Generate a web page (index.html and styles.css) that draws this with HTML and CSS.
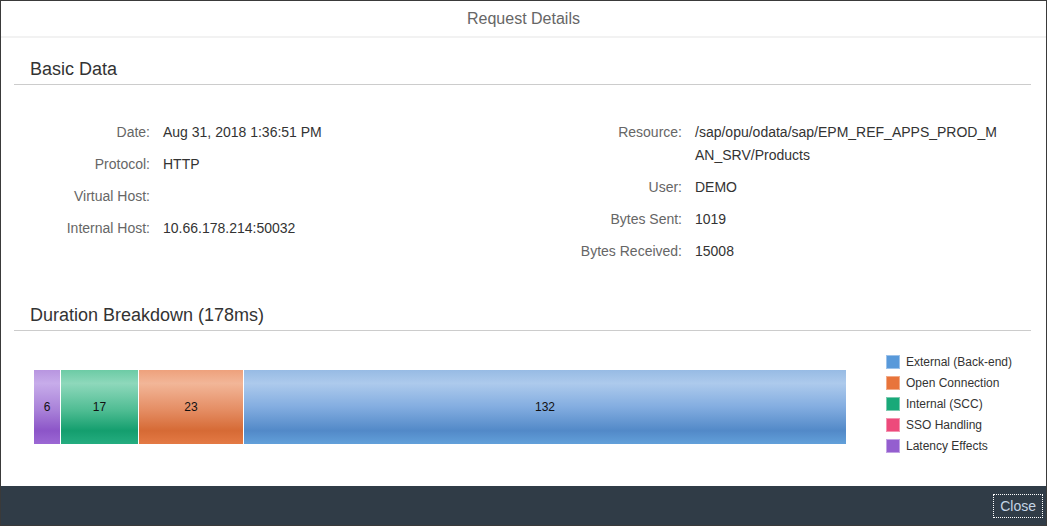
FILE: index.html
```html
<!DOCTYPE html>
<html>
<head>
<meta charset="utf-8">
<link rel="stylesheet" href="styles.css">
</head>
<body>
<div class="dialog">
  <header class="dlg-header">Request Details</header>
  <main class="dlg-content">
    <section class="section">
      <h2 class="section-title">Basic Data</h2>
      <div class="form">
        <div class="pane pane-left">
          <div class="lbl">Date:</div><div class="val">Aug 31, 2018 1:36:51 PM</div>
          <div class="lbl">Protocol:</div><div class="val">HTTP</div>
          <div class="lbl">Virtual Host:</div><div class="val"></div>
          <div class="lbl">Internal Host:</div><div class="val">10.66.178.214:50032</div>
        </div>
        <div class="pane pane-right">
          <div class="lbl">Resource:</div><div class="val wrap">/sap/opu/odata/sap/EPM_REF_APPS_PROD_MAN_SRV/Products</div>
          <div class="lbl">User:</div><div class="val">DEMO</div>
          <div class="lbl">Bytes Sent:</div><div class="val">1019</div>
          <div class="lbl">Bytes Received:</div><div class="val">15008</div>
        </div>
      </div>
    </section>
    <section class="section section-duration">
      <h2 class="section-title">Duration Breakdown (178ms)</h2>
      <div class="chart">
        <div class="bar">
          <div class="seg seg-purple" style="width:26px">6</div>
          <div class="seg seg-green" style="width:78px">17</div>
          <div class="seg seg-orange" style="width:105px">23</div>
          <div class="seg seg-blue" style="width:603px">132</div>
        </div>
        <ul class="legend">
          <li><span class="sw sw-blue"></span>External (Back-end)</li>
          <li><span class="sw sw-orange"></span>Open Connection</li>
          <li><span class="sw sw-green"></span>Internal (SCC)</li>
          <li><span class="sw sw-pink"></span>SSO Handling</li>
          <li><span class="sw sw-purple"></span>Latency Effects</li>
        </ul>
      </div>
    </section>
  </main>
  <footer class="dlg-footer">
    <button class="btn-close">Close</button>
  </footer>
</div>
</body>
</html>
```

FILE: styles.css
```css
html, body {
  margin: 0;
  padding: 0;
  background: #fff;
}
body {
  font-family: "Liberation Sans", Arial, sans-serif;
  color: #333;
}
.dialog {
  width: 1047px;
  height: 526px;
  box-sizing: border-box;
  border: 1px solid #3a3a3a;
  display: flex;
  flex-direction: column;
  background: #fff;
}
.dlg-header {
  height: 35px;
  line-height: 35px;
  text-align: center;
  font-size: 16px;
  color: #666;
  border-bottom: 2px solid #f2f2f2;
  flex: none;
}
.dlg-content {
  flex: 1;
  padding: 0 15px 0 13px;
}
.section-title {
  margin: 0;
  font-weight: normal;
  font-size: 18px;
  line-height: 30px;
  color: #333;
  padding-left: 16px;
  border-bottom: 1px solid #cccccc;
}
.section:first-child .section-title {
  margin-top: 16px;
}
.form {
  display: grid;
  grid-template-columns: 518px 1fr;
  margin-top: 36px;
  font-size: 14px;
}
.pane {
  display: grid;
  column-gap: 13px;
  row-gap: 9px;
  align-content: start;
  line-height: 23px;
}
.pane-left {
  grid-template-columns: 136px 1fr;
}
.pane-right {
  grid-template-columns: 150px 302px;
}
.lbl {
  text-align: right;
  color: #666;
  white-space: nowrap;
}
.val {
  color: #333;
  min-height: 23px;
}
.wrap {
  word-break: break-all;
}
.section-duration .section-title {
  margin-top: 37px;
}
.chart {
  display: flex;
  align-items: flex-start;
  padding-left: 20px;
  margin-top: 23px;
}
.bar {
  display: flex;
  width: 812px;
  height: 74px;
  margin-top: 16px;
  flex: none;
}
.seg {
  height: 74px;
  display: flex;
  align-items: center;
  justify-content: center;
  font-size: 12px;
  color: #111;
  box-sizing: border-box;
  flex: none;
}
.seg + .seg {
  border-left: 1px solid #fff;
}
.seg-purple {
  background: linear-gradient(to bottom, #b895e0 0%, #c7acea 18%, #a880d8 55%, #8c55c8 82%, #9c68d4 100%);
}
.seg-green {
  background: linear-gradient(to bottom, #6ccba5 0%, #8ed8bb 18%, #4ebc92 55%, #149e6e 82%, #25ad80 100%);
}
.seg-orange {
  background: linear-gradient(to bottom, #eea17c 0%, #f2b698 18%, #e48c62 55%, #d66a35 82%, #e47a45 100%);
}
.seg-blue {
  background: linear-gradient(to bottom, #97bbe4 0%, #adcaec 18%, #83ade0 50%, #5289c8 82%, #62a0da 100%);
}
.legend {
  list-style: none;
  margin: 0 0 0 40px;
  padding: 0;
  font-size: 12px;
  color: #333;
}
.legend li {
  display: flex;
  align-items: center;
  height: 21px;
  line-height: 14px;
}
.legend li:first-child {
  margin-top: -3px;
}
.sw {
  width: 14px;
  height: 14px;
  box-sizing: border-box;
  margin-right: 6px;
  flex: none;
}
.sw-blue { background: #5899da; border: 1px solid #9cc2ea; }
.sw-orange { background: #e8743b; border: 1px solid #f2ab88; }
.sw-green { background: #19a979; border: 1px solid #7ccbb0; }
.sw-pink { background: #ed4a7b; border: 1px solid #f493b0; }
.sw-purple { background: #945ecf; border: 1px solid #c2a3e4; }
.dlg-footer {
  height: 39px;
  background: #303c47;
  flex: none;
  display: flex;
  align-items: center;
  justify-content: flex-end;
  padding-right: 3px;
}
.btn-close {
  font-family: "Liberation Sans", Arial, sans-serif;
  font-size: 14px;
  color: #c5d5e5;
  background: transparent;
  border: 1px dotted #ffffff;
  height: 24px;
  padding: 0 6px;
  margin-top: 0;
}
```
